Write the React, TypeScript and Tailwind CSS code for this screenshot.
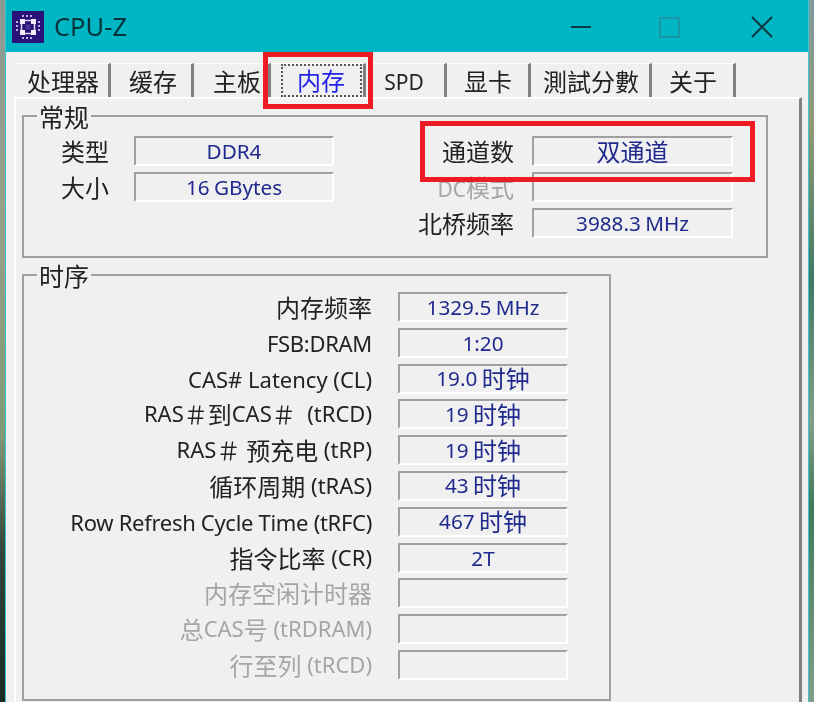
const FONT = "font-['Noto_Sans','Noto_Sans_CJK_SC',sans-serif]";

const tabs = [
  { label: "处理器", w: "w-[96px] pl-[3px]" },
  { label: "缓存", w: "w-[83px] pl-[4px]" },
  { label: "主板", w: "w-[77px] pl-[12px]" },
  { label: "内存", w: "w-[95px] pl-[8px]", active: true },
  { label: "SPD", w: "w-[81px] pr-[2px]" },
  { label: "显卡", w: "w-[84px] pl-[1px]" },
  { label: "測試分數", w: "w-[121px] pl-[2px]" },
  { label: "关于", w: "w-[84px] pl-[1px]" },
];

const timings = [
  { label: "内存频率", value: "1329.5 MHz" },
  { label: "FSB:DRAM", value: "1:20", tight: true },
  { label: "CAS# Latency (CL)", value: "19.0 时钟" },
  { label: "RAS＃到CAS＃\u00a0 (tRCD)", value: "19 时钟" },
  { label: "RAS＃ 预充电 (tRP)", value: "19 时钟" },
  { label: "循环周期 (tRAS)", value: "43 时钟" },
  { label: "Row Refresh Cycle Time (tRFC)", value: "467 时钟", tight: true },
  { label: "指令比率 (CR)", value: "2T" },
  { label: "内存空闲计时器", value: "", off: true },
  { label: "总CAS号 (tRDRAM)", value: "", off: true },
  { label: "行至列 (tRCD)", value: "", off: true },
];

// the CJK glyphs sit larger and a bit lower than the latin ones in this window
function Mixed({ text }: { text: string }) {
  const parts = text.split(/([\u3000-\u9fff\uff00-\uffef]+)/).filter(Boolean);
  return (
    <>
      {parts.map((p, i) =>
        /[\u3000-\u9fff\uff00-\uffef]/.test(p) ? (
          <span key={i} className="align-[-2px] text-[24px] tracking-normal">
            {p}
          </span>
        ) : (
          <span key={i}>{p}</span>
        ),
      )}
    </>
  );
}

function Field({ value, className }: { value?: string; className?: string }) {
  return (
    <div
      className={`flex h-[30px] items-center justify-center border-2 border-t-[#a0a0a0] border-r-white border-b-white border-l-[#a0a0a0] pt-[1px] text-[20.7px] leading-none text-[#1f2a8c] [word-spacing:-1px] ${className ?? ""}`}
    >
      {value ? (
        <span className="whitespace-nowrap">
          <Mixed text={value} />
        </span>
      ) : null}
    </div>
  );
}

function Group({ title, className, children }: { title: string; className: string; children: React.ReactNode }) {
  return (
    <div className={`relative border-2 border-[#a0a0a0] ${className}`}>
      <div className="absolute top-[-15px] left-[13px] bg-[#f0f0f0] px-[2px] text-[25px] leading-[30px] text-[#222]">{title}</div>
      {children}
    </div>
  );
}

function ChipIcon() {
  return (
    <svg width="32" height="32" viewBox="0 0 32 32" className="shrink-0">
      <rect width="32" height="32" fill="#2a1278" />
      <rect x="9.5" y="9.5" width="13" height="13" rx="2" fill="none" stroke="#d8d2ee" strokeWidth="1.6" />
      <path d="M8 8h5v5H8zM19 8h5v5h-5zM8 19h5v5H8zM19 19h5v5h-5z" fill="#f0edf8" />
      <rect x="13.5" y="13.5" width="5" height="5" fill="#4a3496" />
      <path d="M10 5h12M10 27h12M5 10v12M27 10v12" stroke="#b9b0e0" strokeWidth="2" strokeDasharray="2 2" />
    </svg>
  );
}

export default function App() {
  return (
    <div className={`flex h-[702px] w-[814px] overflow-hidden blur-[0.5px] ${FONT}`}>
      <div className="w-[5px] bg-[linear-gradient(180deg,#8a9a94_0%,#9aa088_30%,#7f9a78_62%,#2f4a3c_78%,#1a2a24_100%)]" />

      <div className="relative flex w-[804px] flex-col border-x border-[#3cc4d0]">
        <div className="flex h-[52px] items-center bg-[#00b5c4] pt-[1px] pl-[6px]">
          <ChipIcon />
          <span className="ml-[10px] text-[25.5px] leading-none text-[#06333a]">CPU-Z</span>
          <svg width="240" height="30" viewBox="0 0 240 30" className="mr-[35px] ml-auto" fill="none">
            <path d="M38 15h20" stroke="#0a3a44" strokeWidth="2" />
            <rect x="127" y="6" width="19" height="19" stroke="#1a97a6" strokeWidth="2" />
            <path d="M219 5l20 20M239 5l-20 20" stroke="#0a3a44" strokeWidth="2" />
          </svg>
        </div>

        <div className="flex flex-1 flex-col bg-[#f0f0f0] pt-[11px] pr-[6px] pl-[8px]">
          <div className="relative z-10 flex h-[34px] pl-[1px]">
            {tabs.map((t) => (
              <div
                key={t.label}
                className={`flex ${t.w} h-[34px] items-center justify-center border-t border-r-[3px] border-t-white border-r-[#808080] pt-[3px] text-[24px] leading-none ${
                  t.active ? "text-[#2323e6]" : "text-[#222]"
                }`}
              >
                {t.label === "SPD" ? (
                  <span className="text-[21px]">{t.label}</span>
                ) : t.active ? (
                  <span className="mt-[-3px] flex h-[33px] w-[81px] items-center justify-center border-2 border-dotted border-[#555] pt-[1px]">{t.label}</span>
                ) : (
                  t.label
                )}
              </div>
            ))}
          </div>

          <div className="flex flex-1 flex-col border-t-2 border-r-[3px] border-l-2 border-t-white border-r-[#808080] border-l-white pt-[16px] pl-[6px]">
            <Group title="常规" className="h-[143px] w-[746px]">
              <div className="grid grid-cols-[110px_200px_198px_201px] items-center gap-y-[6px] pt-[19px] text-[24px] leading-none text-[#222]">
                <div className="pt-[2px] pl-[37px]">类型</div>
                <Field value="DDR4" />
                <div className="pt-[2px] pr-[18px] text-right">通道数</div>
                <Field value="双通道" />
                <div className="pt-[2px] pl-[37px]">大小</div>
                <Field value="16 GBytes" />
                <div className="pt-[2px] pr-[18px] text-right text-[#a5a5a5]">
                  <span className="text-[21px]">DC</span>模式
                </div>
                <Field />
                <div />
                <div />
                <div className="pt-[2px] pr-[18px] text-right">北桥频率</div>
                <Field value="3988.3 MHz" />
              </div>
            </Group>

            <Group title="时序" className="mt-[16px] h-[427px] w-[589px]">
              <div className="grid grid-cols-[374px_170px] items-center gap-y-[5.8px] pt-[16px] text-[22px] leading-none text-[#222]">
                {timings.map((row) => (
                  <div key={row.label} className="contents">
                    <div
                      className={`whitespace-nowrap pt-[1px] pr-[26px] text-right ${row.off ? "text-[#a5a5a5]" : ""} ${
                        row.tight ? "tracking-[-0.3px]" : ""
                      }`}
                    >
                      <Mixed text={row.label} />
                    </div>
                    <Field value={row.value} />
                  </div>
                ))}
              </div>
            </Group>
          </div>
        </div>

        {/* red annotation boxes drawn over the window */}
        <div className="absolute top-[52px] left-[257px] z-20 h-[57px] w-[110px] border-[5px] border-[#ed1c24]" />
        <div className="absolute top-[121px] left-[414px] z-20 h-[61px] w-[335px] border-[5px] border-[#ed1c24]" />
      </div>

      <div className="w-[5px] bg-[linear-gradient(180deg,#7f9aa0_0%,#8e9a74_18%,#3f7a66_40%,#80a088_60%,#3f7a5c_72%,#7f9f88_100%)]" />
    </div>
  );
}
